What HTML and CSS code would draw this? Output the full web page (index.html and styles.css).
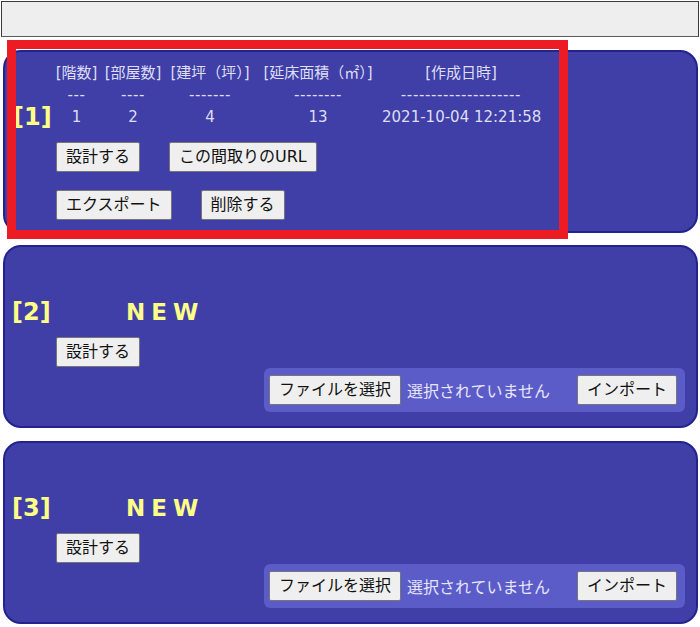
FILE: index.html
```html
<!DOCTYPE html>
<html lang="ja">
<head>
<meta charset="utf-8">
<link rel="stylesheet" href="styles.css">
</head>
<body>
<div class="page">
  <div class="topbar"></div>

  <div class="card">
    <div class="grid">
      <span></span>
      <span class="hd">[階数]</span>
      <span class="hd">[部屋数]</span>
      <span class="hd">[建坪（坪）]</span>
      <span class="hd">[延床面積（㎡）]</span>
      <span class="hd">[作成日時]</span>

      <span></span>
      <span class="dash">---</span>
      <span class="dash">----</span>
      <span class="dash">-------</span>
      <span class="dash">--------</span>
      <span class="dash">--------------------</span>

      <span class="label">[1]</span>
      <span class="val">1</span>
      <span class="val">2</span>
      <span class="val">4</span>
      <span class="val">13</span>
      <span class="val">2021-10-04 12:21:58</span>
    </div>
    <div class="btnrow first">
      <button class="btn">設計する</button>
      <button class="btn">この間取りのURL</button>
    </div>
    <div class="btnrow second">
      <button class="btn">エクスポート</button>
      <button class="btn">削除する</button>
    </div>
  </div>

  <div class="card">
    <div class="grid">
      <span class="empty"></span>
      <span class="empty"></span>
      <span class="label lab2">[2]</span>
      <span class="new">NEW</span>
    </div>
    <div class="btnrow first">
      <button class="btn">設計する</button>
    </div>
    <div class="importrow">
      <div class="importpanel">
        <button class="btn">ファイルを選択</button>
        <span class="nofile">選択されていません</span>
        <button class="btn">インポート</button>
      </div>
    </div>
  </div>

  <div class="card">
    <div class="grid">
      <span class="empty"></span>
      <span class="empty"></span>
      <span class="label lab2">[3]</span>
      <span class="new">NEW</span>
    </div>
    <div class="btnrow first">
      <button class="btn">設計する</button>
    </div>
    <div class="importrow">
      <div class="importpanel">
        <button class="btn">ファイルを選択</button>
        <span class="nofile">選択されていません</span>
        <button class="btn">インポート</button>
      </div>
    </div>
  </div>

  <div class="highlight"></div>
</div>
</body>
</html>
```

FILE: styles.css
```css
* { box-sizing: border-box; }

html, body {
  margin: 0;
  padding: 0;
  background: #ffffff;
}

body {
  font-family: "DejaVu Sans", "Noto Sans CJK JP", sans-serif;
  font-size: 15px;
}

.page {
  position: relative;
  padding: 1px 1px 0 1px;
}

.topbar {
  height: 36px;
  background: #eeeeee;
  border: 1px solid #3a3a3a;
  border-bottom-color: #5a5a5a;
  margin-bottom: 13px;
}

.card {
  height: 183px;
  margin: 0 1px 12px 2px;
  background: #3f3fa7;
  border: 2px solid #23238e;
  border-radius: 18px;
  padding: 10px 0 0 8px;
}

.card + .card + .card {
  margin-top: 13px;
}

.grid {
  display: grid;
  grid-template-columns: 40px 47px 66px 88px 128px 158px;
  grid-auto-rows: 22px;
  line-height: 22px;
  color: #dedef4;
}

.grid > span {
  text-align: center;
  white-space: nowrap;
}

.empty {
  grid-column: 1 / -1;
}

.hd {
  font-size: 15px;
}

.dash {
  letter-spacing: 0.6px;
}

.grid > .label {
  text-align: left;
  color: #ffff88;
  font-weight: bold;
  font-size: 24px;
  line-height: 22px;
}

.grid > .lab2 {
  margin-left: -1px;
}

.grid > .new {
  grid-column: 2 / -1;
  text-align: left;
  padding-left: 73px;
  color: #ffff88;
  font-weight: bold;
  font-size: 23px;
  letter-spacing: 6px;
}

.btnrow {
  display: flex;
  gap: 29px;
  margin-left: 43px;
}

.btnrow.first {
  margin-top: 14px;
}

.btnrow.second {
  margin-top: 18px;
}

.btn {
  height: 30px;
  padding: 0 9px;
  background: #efefef;
  border: 1px solid #767676;
  border-radius: 2px;
  color: #111;
  font-family: "DejaVu Sans", "Noto Sans CJK JP", sans-serif;
  font-size: 16px;
  line-height: 28px;
  white-space: nowrap;
}

.importrow {
  display: flex;
  justify-content: flex-end;
  margin-top: 1px;
  margin-right: 11px;
}

.importpanel {
  display: flex;
  align-items: center;
  height: 44px;
  padding: 0 8px 0 5px;
  background: #5c5cc8;
  border-radius: 6px;
}

.nofile {
  color: #e6e6fa;
  font-size: 16px;
  margin-left: 6px;
  margin-right: 27px;
  white-space: nowrap;
}

.highlight {
  position: absolute;
  left: 7px;
  top: 40px;
  width: 561px;
  height: 199px;
  border: 9px solid #ed1c24;
}
```
